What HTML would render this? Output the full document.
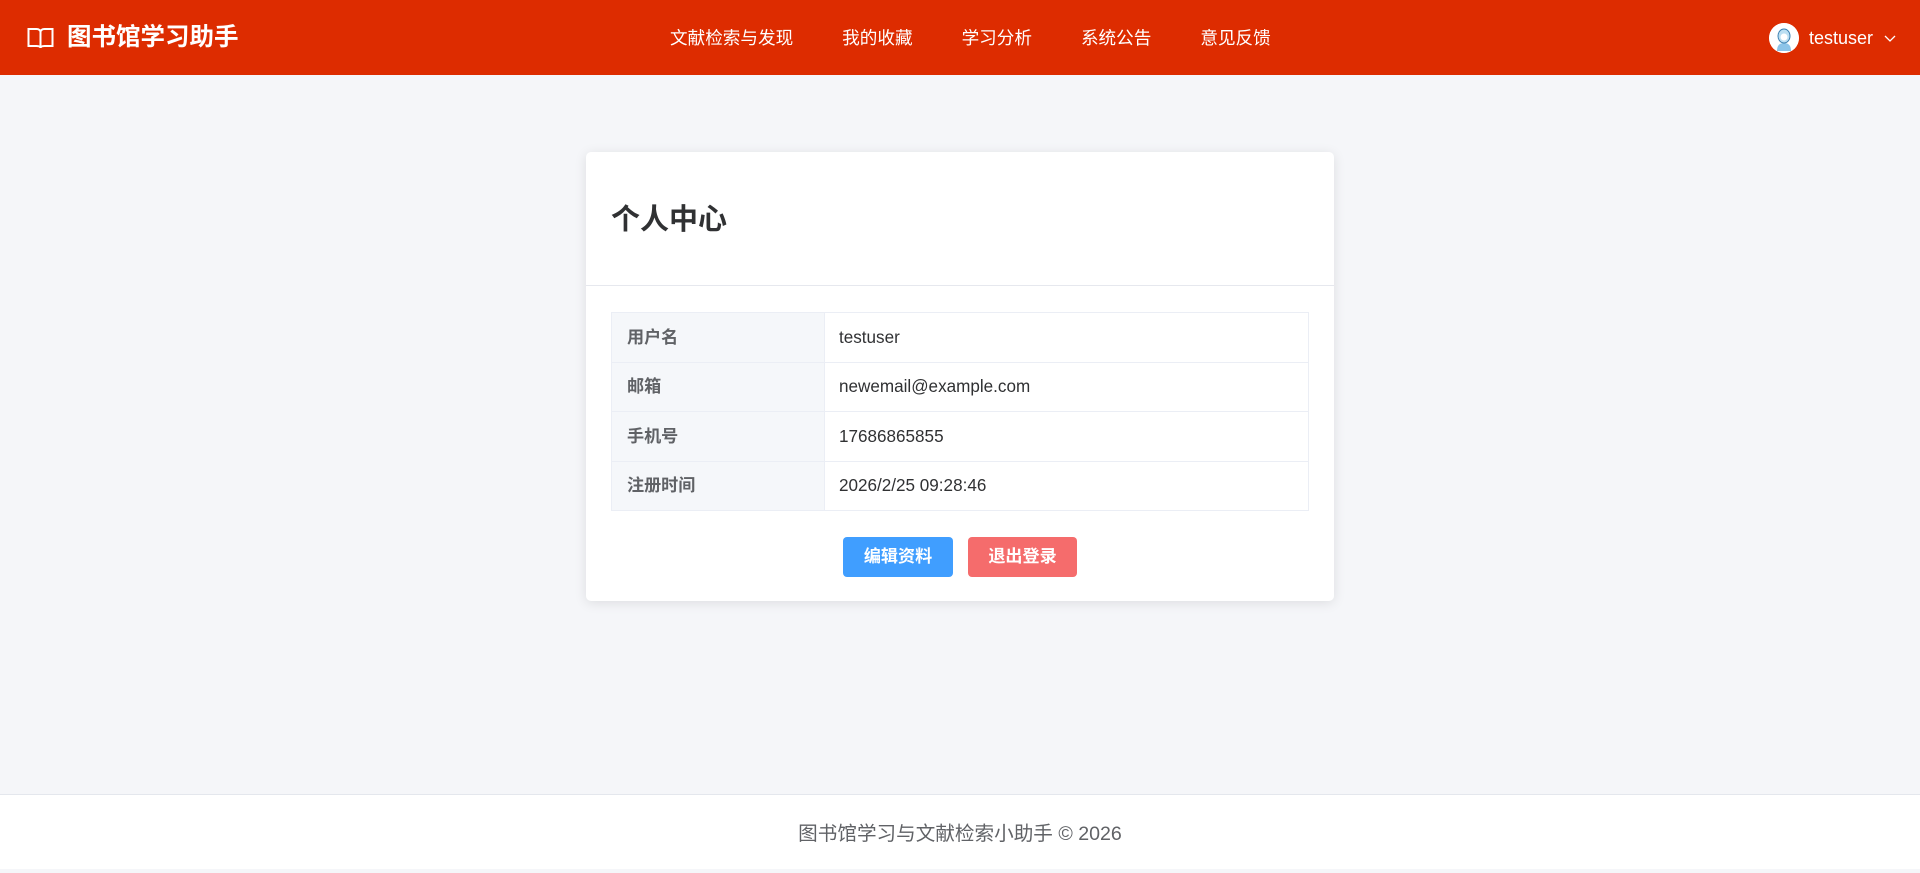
<!DOCTYPE html>
<html><head><meta charset="utf-8"><style>
*{margin:0;padding:0;box-sizing:border-box}
body{width:1920px;height:869px;overflow:hidden;background:#f5f6f9;font-family:"Liberation Sans","Noto Sans CJK SC",sans-serif;position:relative}
.hdr{position:absolute;left:0;top:0;width:1920px;height:75px;background:#dd2c00;color:#fff}
.logo{position:absolute;left:27px;top:24px;display:flex;align-items:center}
.logo span{font-size:24.5px;font-weight:bold;margin-left:13px;line-height:28px}
.nav{position:absolute;top:0;left:670px;height:75px;display:flex;align-items:center;font-size:17.6px}
.nav a{margin-right:49px;color:#fff;text-decoration:none}
.user{position:absolute;left:1769px;top:23px;display:flex;align-items:center;font-size:18px}
.av{width:30px;height:30px;border-radius:50%;background:#fff;margin-right:10px;overflow:hidden}
.card{position:absolute;left:586px;top:152px;width:748px;height:449px;background:#fff;border-radius:5px;box-shadow:0 2px 12px rgba(0,0,0,.1)}
.card h2{position:absolute;left:25px;top:48px;font-size:29px;line-height:40px;color:#303133;font-weight:bold}
.div{position:absolute;left:0;top:133px;width:748px;height:1px;background:#e6e8ee}
table{position:absolute;left:25px;top:160px;width:698px;border-collapse:collapse;font-size:17.1px}
td{border:1px solid #ebeef5;height:49.6px;padding:0 14px;color:#303133;line-height:20px;vertical-align:middle}
td span{display:inline-block;vertical-align:middle;line-height:20px}
td.l{width:213px;background:#f5f7fa;color:#606266;font-weight:bold;padding-left:15px}
.btn{position:absolute;top:385px;height:40px;border-radius:4px;color:#fff;font-size:17.1px;font-weight:bold;display:flex;align-items:center;justify-content:center;line-height:20px}
.foot{position:absolute;left:0;top:794px;width:1920px;height:75px;background:#fff;border-top:1px solid #e4e7ed;text-align:center;font-size:19.6px;color:#606266;line-height:78px}
</style></head><body>
<div class="hdr">
<div class="logo"><svg width="27" height="24" viewBox="0 0 27 24" fill="none" stroke="#fff" stroke-width="2"><path d="M1.5 3h8c2.5 0 4 1.5 4 3v16c0-1.5-1.5-2-4-2h-8z M25.5 3h-8c-2.5 0-4 1.5-4 3v16c0-1.5 1.5-2 4-2h8z"/></svg><span>图书馆学习助手</span></div>
<div class="nav"><a>文献检索与发现</a><a>我的收藏</a><a>学习分析</a><a>系统公告</a><a>意见反馈</a></div>
<div class="user"><div class="av"><svg width="30" height="30" viewBox="0 0 30 30"><circle cx="15" cy="15" r="15" fill="#fff"/><path d="M8 28c0-5 2-8 7-8s7 3 7 8z" fill="#8cc4e8"/><ellipse cx="15" cy="13" rx="6" ry="7" fill="#bcdff2" stroke="#3a7fb0" stroke-width="1"/><circle cx="15" cy="14" r="3.5" fill="#fff"/></svg></div>testuser<svg style="margin-left:10px" width="14" height="10" viewBox="0 0 14 10"><path d="M2 3l5 5 5-5" stroke="#fff" stroke-width="1.3" fill="none"/></svg></div>
</div>
<div class="card">
<h2>个人中心</h2>
<div class="div"></div>
<table>
<tr><td class="l"><span>用户名</span></td><td><span>testuser</span></td></tr>
<tr><td class="l"><span>邮箱</span></td><td><span>newemail@example.com</span></td></tr>
<tr><td class="l"><span>手机号</span></td><td><span>17686865855</span></td></tr>
<tr><td class="l"><span>注册时间</span></td><td><span>2026/2/25 09:28:46</span></td></tr>
</table>
<div class="btn" style="left:257px;width:110px;background:#409eff">编辑资料</div>
<div class="btn" style="left:382px;width:109px;background:#f56c6c">退出登录</div>
</div>
<div class="foot">图书馆学习与文献检索小助手 © 2026</div>
</body></html>
